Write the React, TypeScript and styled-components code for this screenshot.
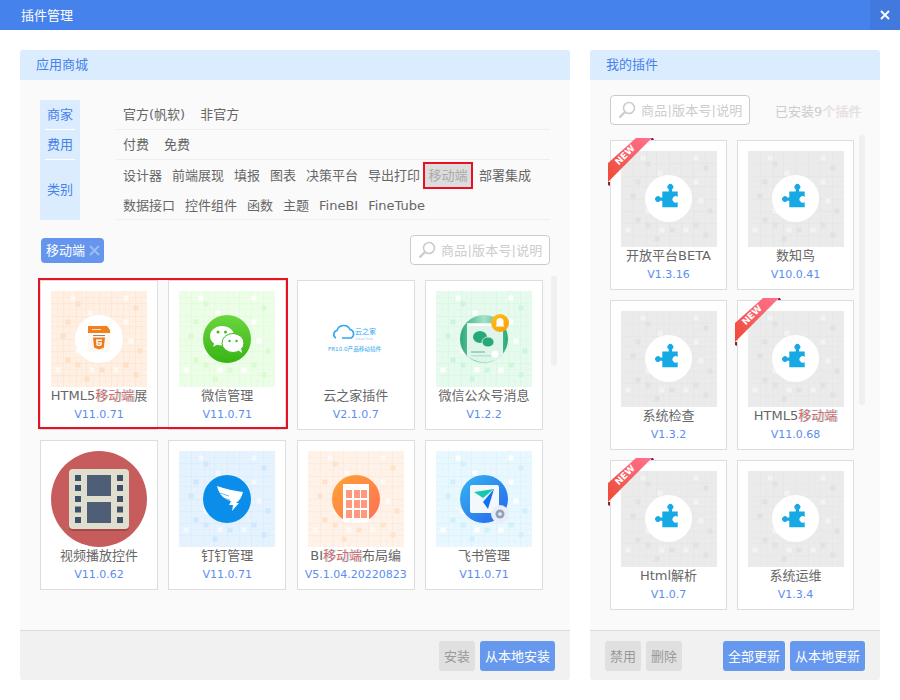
import React from 'react'
import styled, { createGlobalStyle } from 'styled-components'

const FONT = `"DejaVu Sans", "Noto Sans CJK SC", sans-serif`

const GlobalStyle = createGlobalStyle`
  html, body {
    margin: 0;
    padding: 0;
    background: #fff;
    font-family: ${FONT};
    font-size: 13px;
    color: #666;
  }
  * { box-sizing: border-box; }
`

const Mark = styled.span`
  color: #dc6468;
  text-shadow: 1px 0 rgba(60, 220, 220, 0.55);
`

type Tone = 'orange' | 'green' | 'mint' | 'blue' | 'sky' | 'grey' | 'salmon'

const tones: Record<Tone, { bg: string; line: string; dark: string; light: string }> = {
  orange: { bg: '#fff0e3', line: '#fbe7d5', dark: '#fde0c8', light: '#fff9f4' },
  salmon: { bg: '#fff3e9', line: '#fdeadb', dark: '#fee3cc', light: '#fffaf6' },
  green: { bg: '#edfee8', line: '#e3fbdc', dark: '#d9fbcf', light: '#ffffff' },
  mint: { bg: '#e6fbee', line: '#d9f8e5', dark: '#cdf5db', light: '#ffffff' },
  blue: { bg: '#e6f3fe', line: '#d9edfd', dark: '#cfe8fd', light: '#f3f9ff' },
  sky: { bg: '#e9f8fe', line: '#ddf3fd', dark: '#d2effc', light: '#ffffff' },
  grey: { bg: '#ebebeb', line: '#e7e7e7', dark: '#e1e1e1', light: '#f3f3f3' },
}

const gridLines = [12, 25, 35, 48, 60, 72, 84]
const fineLines = [6, 18, 30, 42, 54, 66, 78, 90]
const darkCells = [
  [27, 13], [85, 17], [17, 31], [12, 45], [89, 60], [17, 69], [27, 74], [75, 74], [51, 79], [85, 84], [36, 88],
]
const lightCells = [
  [22, 7], [75, 7], [39, 22], [75, 31], [80, 50], [7, 79], [41, 79], [65, 79], [27, 60],
]

function Tile({ tone, children }: { tone: Tone; children?: React.ReactNode }) {
  const t = tones[tone]
  return (
    <TileSvg viewBox="0 0 96 96">
      <rect width="96" height="96" fill={t.bg} />
      {fineLines.map((p) => (
        <g key={p} fill={t.line} opacity="0.35">
          <rect x={p} y="0" width="1" height="96" />
          <rect x="0" y={p} width="96" height="1" />
        </g>
      ))}
      {gridLines.map((p) => (
        <g key={p} fill={t.line} opacity="0.8">
          <rect x={p} y="0" width="1" height="96" />
          <rect x="0" y={p} width="96" height="1" />
        </g>
      ))}
      {darkCells.map(([x, y]) => (
        <rect key={`d${x}-${y}`} x={x - 2.5} y={y - 2.5} width="5" height="5" fill={t.dark} />
      ))}
      {lightCells.map(([x, y]) => (
        <rect key={`l${x}-${y}`} x={x - 2.5} y={y - 2.5} width="5" height="5" fill={t.light} />
      ))}
      {children}
    </TileSvg>
  )
}

function PuzzleArt() {
  return (
    <Tile tone="grey">
      <circle cx="47.5" cy="47.5" r="23.5" fill="#fff" />
      <path
        d="M41.3 40.5h6.4v-2.2a2.9 2.9 0 1 1 3.4 0v2.2h5.6v5.4a3.2 3.2 0 1 0 0 5v5.4H41.3v-6.6h-2.1a2.8 2.8 0 1 1 0-3.3h2.1z"
        fill="#16a9e3"
      />
    </Tile>
  )
}

function Html5Art() {
  return (
    <Tile tone="orange">
      <circle cx="48" cy="48" r="24" fill="#fff" />
      <rect x="37" y="35" width="22" height="26" fill="#fff8f2" />
      <path d="M37 35h19l3 4v3H37z" fill="#f2811d" />
      <rect x="41" y="38" width="9" height="1" fill="#fde0c0" />
      <rect x="42" y="44" width="12" height="1" fill="#8a8a8a" />
      <path d="M42 46.500h12l-1.100 10-4.900 1.900-4.900-1.900z" fill="#ef7a1a" />
      <path d="M45 48.500h6v1.500h-4.300v1.300h4.300l-.4 3-2.600.9-2.600-.9-.2-1.500h1.500l.1.600 1.200.4 1.200-.4.2-1h-4.100z" fill="#fff" />
    </Tile>
  )
}

function WechatArt() {
  return (
    <Tile tone="green">
      <defs>
        <linearGradient id="wxg" x1="0" y1="0" x2="0" y2="1">
          <stop offset="0" stopColor="#6ad63e" />
          <stop offset="1" stopColor="#37b416" />
        </linearGradient>
      </defs>
      <circle cx="48" cy="48" r="24" fill="url(#wxg)" />
      <path d="M43 35c-6.500 0-12 4.500-12 10 0 3 1.600 5.600 4.100 7.400l-1 3.400 4-2.100c1.500.4 3.200.7 4.900.7 6.600 0 12-4.500 12-10s-5.400-9.400-12-9.400z" fill="#fff" />
      <ellipse cx="54" cy="52" rx="11" ry="9.500" fill="#fff" stroke="#43bb20" strokeWidth="1" />
      <path d="M59.500 59.500l3.500 2.500-.8-4z" fill="#fff" />
      <circle cx="39" cy="41" r="1.500" fill="#43bb20" />
      <circle cx="46.500" cy="41" r="1.500" fill="#43bb20" />
      <circle cx="50.500" cy="50" r="1.200" fill="#43bb20" />
      <circle cx="57.500" cy="50" r="1.200" fill="#43bb20" />
    </Tile>
  )
}

function CloudArt() {
  return (
    <TileSvg viewBox="0 0 96 96">
      <path d="M28 47a4 4 0 0 1 1-7.500 7 7 0 0 1 13-1 4.500 4.500 0 0 1 1 8.500H34" fill="none" stroke="#2ea7f2" strokeWidth="1.600" />
      <CloudText x="47" y="43" fontSize="7" fill="#2ea7f2">云之家</CloudText>
      <CloudText x="47" y="48.500" fontSize="3.400" fill="#8ccbf5">Cloud Hub</CloudText>
      <CloudText x="20" y="60" fontSize="5.600" fill="#35aaf3">FR10.0产品移动插件</CloudText>
    </TileSvg>
  )
}

function OfficialAccountArt() {
  return (
    <Tile tone="mint">
      <defs>
        <linearGradient id="oag" x1="0" y1="0" x2="1" y2="0">
          <stop offset="0" stopColor="#2aa878" />
          <stop offset=".5" stopColor="#a5e2c8" />
          <stop offset="1" stopColor="#2aa878" />
        </linearGradient>
        <linearGradient id="bell" x1="0" y1="0" x2="1" y2="1">
          <stop offset="0" stopColor="#ffc21a" />
          <stop offset="1" stopColor="#fb9b06" />
        </linearGradient>
      </defs>
      <circle cx="48" cy="48" r="24" fill="url(#oag)" />
      <path d="M31 32h36v33c-5 4-12 6-18 6s-13-2-18-6z" fill="#dff5ec" />
      <rect x="33" y="33" width="32" height="2" fill="#fff" />
      <ellipse cx="44" cy="46" rx="7" ry="6" fill="#27a877" />
      <ellipse cx="52" cy="51" rx="6" ry="5" fill="#27a877" stroke="#dff5ec" strokeWidth=".8" />
      <rect x="35" y="60" width="14" height="2" fill="#9ad8bd" />
      <rect x="35" y="64" width="20" height="1.500" fill="#b9e4d0" />
      <circle cx="59" cy="63" r="3.500" fill="#fff" />
      <circle cx="64" cy="32" r="9" fill="url(#bell)" />
      <path d="M64 27a3.500 3.500 0 0 0-3.500 3.500V34l-1 1.500h9L67.500 34v-3.500A3.500 3.500 0 0 0 64 27z" fill="#fff" />
    </Tile>
  )
}

const filmHoles = [24, 34, 45, 55.5, 66]

function FilmArt() {
  return (
    <TileSvg viewBox="0 0 96 96">
      <circle cx="48" cy="48" r="48" fill="#c65c5c" />
      <rect x="18" y="20" width="60" height="60" rx="4" fill="#a34a4a" />
      <rect x="18" y="18" width="60" height="60" rx="4" fill="#e0dfcf" />
      <rect x="36" y="24" width="24" height="21" fill="#4d5e76" />
      <rect x="36" y="51" width="24" height="21" fill="#4d5e76" />
      {filmHoles.map((y) => (
        <g key={y} fill="#3f5069">
          <rect x="24" y={y} width="6" height="6" />
          <rect x="66" y={y} width="6" height="6" />
        </g>
      ))}
    </TileSvg>
  )
}

function DingtalkArt() {
  return (
    <Tile tone="blue">
      <circle cx="48" cy="48" r="24" fill="#0a8ee9" />
      <path d="M38 35c8 3 18 5 26 6-1 5-4 9-7 11h3l-7 8 1-6h-4l2-4c-6-1-12-6-14-15z" fill="#fff" />
      <path d="M41 42l9 3M44 47l7 2" stroke="#0a8ee9" strokeWidth=".6" />
    </Tile>
  )
}

function LayoutArt() {
  return (
    <Tile tone="salmon">
      <defs>
        <linearGradient id="big" x1="0" y1="0" x2="1" y2="1">
          <stop offset="0" stopColor="#ffa432" />
          <stop offset="1" stopColor="#ff6d5a" />
        </linearGradient>
      </defs>
      <circle cx="48" cy="48" r="24" fill="url(#big)" />
      <path d="M35 33h26v37c-4 1.700-8 2-13 2s-9-.5-13-2z" fill="#fff" />
      {[38, 46, 53].map((x) =>
        [39, 49, 59].map((y) => <rect key={`${x}-${y}`} x={x} y={y} width="6" height="8" fill="#ff9a80" />),
      )}
    </Tile>
  )
}

function FeishuArt() {
  return (
    <Tile tone="sky">
      <defs>
        <linearGradient id="fsg" x1="0" y1="0" x2="1" y2="1">
          <stop offset="0" stopColor="#35b6f0" />
          <stop offset="1" stopColor="#2763ee" />
        </linearGradient>
      </defs>
      <circle cx="48" cy="48" r="24" fill="url(#fsg)" />
      <rect x="34" y="34" width="29" height="28" rx="2" fill="#f4f8fd" />
      <path d="M38 41l20-3-11 9z" fill="#14c9ad" />
      <path d="M58 38l-11 13 5 7z" fill="#0f72f0" />
      <circle cx="64" cy="63" r="9" fill="#e8eef7" />
      <circle cx="64" cy="63" r="4.500" fill="#8fa3bf" />
      <circle cx="64" cy="63" r="1.800" fill="#e8eef7" />
    </Tile>
  )
}

function Ribbon() {
  return (
    <RibbonSvg viewBox="0 0 46 48">
      <defs>
        <linearGradient id="rb" x1="1" y1="0" x2="0" y2="1">
          <stop offset="0" stopColor="#ff7392" />
          <stop offset="1" stopColor="#ee4a33" />
        </linearGradient>
      </defs>
      <path d="M43 0h2l1 2h-3zM0 44v3l2 1v-4z" fill="#8c1f35" />
      <path d="M28 0h16L0 44V25z" fill="url(#rb)" />
      <RibbonText x="17" y="20" transform="rotate(-45 17 17)">NEW</RibbonText>
    </RibbonSvg>
  )
}

function SearchBox() {
  return (
    <SearchField>
      <svg width="20" height="20" viewBox="0 0 20 20" fill="none" stroke="#ccc">
        <circle cx="12" cy="8" r="5.500" strokeWidth="1.600" />
        <path d="M8 12l-5.500 5.500" strokeWidth="2.400" />
      </svg>
      <SearchHint>商品|版本号|说明</SearchHint>
    </SearchField>
  )
}

const storeCards: { name: React.ReactNode; version: string; art: React.ReactNode }[] = [
  { name: <>HTML5<Mark>移动端</Mark>展</>, version: 'V11.0.71', art: <Html5Art /> },
  { name: '微信管理', version: 'V11.0.71', art: <WechatArt /> },
  { name: '云之家插件', version: 'V2.1.0.7', art: <CloudArt /> },
  { name: '微信公众号消息', version: 'V1.2.2', art: <OfficialAccountArt /> },
  { name: '视频播放控件', version: 'V11.0.62', art: <FilmArt /> },
  { name: '钉钉管理', version: 'V11.0.71', art: <DingtalkArt /> },
  { name: <>BI<Mark>移动端</Mark>布局编</>, version: 'V5.1.04.20220823', art: <LayoutArt /> },
  { name: '飞书管理', version: 'V11.0.71', art: <FeishuArt /> },
]

const myCards: { name: React.ReactNode; version: string; isNew?: boolean }[] = [
  { name: '开放平台BETA', version: 'V1.3.16', isNew: true },
  { name: '数知鸟', version: 'V10.0.41' },
  { name: '系统检查', version: 'V1.3.2' },
  { name: <>HTML5<Mark>移动端</Mark></>, version: 'V11.0.68', isNew: true },
  { name: 'Html解析', version: 'V1.0.7', isNew: true },
  { name: '系统运维', version: 'V1.3.4' },
]

export default function App() {
  return (
    <>
      <GlobalStyle />
      <TitleBar>
        <TitleText>插件管理</TitleText>
        <CloseButton>
          <svg width="10" height="10" viewBox="0 0 10 10" stroke="#fff" strokeWidth="1.800">
            <path d="M1 1l8 8M9 1l-8 8" />
          </svg>
        </CloseButton>
      </TitleBar>
      <Content>
        <Panel $width={550}>
          <PanelHeader>应用商城</PanelHeader>
          <StoreBody>
            <Filters>
              <FilterLabels>
                <FilterLabel $height={30}>商家</FilterLabel>
                <FilterLabel $height={30}>费用</FilterLabel>
                <FilterLabel $height={60} $last>类别</FilterLabel>
              </FilterLabels>
              <FilterRows>
                <FilterGroup>
                  <FilterLine $gap={5}>
                    <FilterItem>官方(帆软)</FilterItem>
                    <FilterItem>非官方</FilterItem>
                  </FilterLine>
                </FilterGroup>
                <FilterGroup>
                  <FilterLine $gap={5}>
                    <FilterItem>付费</FilterItem>
                    <FilterItem>免费</FilterItem>
                  </FilterLine>
                </FilterGroup>
                <FilterGroup>
                  <FilterLine $gap={0}>
                    <FilterItem>设计器</FilterItem>
                    <FilterItem>前端展现</FilterItem>
                    <FilterItem>填报</FilterItem>
                    <FilterItem>图表</FilterItem>
                    <FilterItem>决策平台</FilterItem>
                    <FilterItem>导出打印</FilterItem>
                    <FilterItem $active>移动端</FilterItem>
                    <FilterItem>部署集成</FilterItem>
                  </FilterLine>
                  <FilterLine $gap={0}>
                    <FilterItem>数据接口</FilterItem>
                    <FilterItem>控件组件</FilterItem>
                    <FilterItem>函数</FilterItem>
                    <FilterItem>主题</FilterItem>
                    <FilterItem>FineBI</FilterItem>
                    <FilterItem>FineTube</FilterItem>
                  </FilterLine>
                </FilterGroup>
              </FilterRows>
            </Filters>
            <StoreTools>
              <SelectedTag>
                <TagText>移动端</TagText>
                <svg width="11" height="11" viewBox="0 0 11 11" stroke="#9dbcf5" strokeWidth="2">
                  <path d="M1 1l9 9M10 1l-9 9" />
                </svg>
              </SelectedTag>
              <SearchBox />
            </StoreTools>
            <StoreGridArea>
              <StoreGrid>
                {storeCards.map((card, i) => (
                  <PluginCard key={i}>
                    {card.art}
                    <CardName>{card.name}</CardName>
                    <CardVersion>{card.version}</CardVersion>
                  </PluginCard>
                ))}
              </StoreGrid>
              <Highlight />
              <ScrollThumb $top={-4} $height={90} $right={-7} />
            </StoreGridArea>
          </StoreBody>
          <PanelFooter>
            <span />
            <ButtonGroup>
              <ActionButton disabled>安装</ActionButton>
              <ActionButton>从本地安装</ActionButton>
            </ButtonGroup>
          </PanelFooter>
        </Panel>
        <Panel $width={290}>
          <PanelHeader>我的插件</PanelHeader>
          <MineBody>
            <MineTools>
              <SearchBox />
              <InstalledCount>已安装9<Pale>个插件</Pale></InstalledCount>
            </MineTools>
            <MineGridArea>
              <MineGrid>
                {myCards.map((card) => (
                  <PluginCard key={card.version}>
                    {card.isNew && <Ribbon />}
                    <PuzzleArt />
                    <CardName>{card.name}</CardName>
                    <CardVersion>{card.version}</CardVersion>
                  </PluginCard>
                ))}
              </MineGrid>
              <ScrollThumb $top={-5} $height={270} $right={15} />
            </MineGridArea>
          </MineBody>
          <PanelFooter>
            <ButtonGroup>
              <ActionButton disabled>禁用</ActionButton>
              <ActionButton disabled>删除</ActionButton>
            </ButtonGroup>
            <ButtonGroup>
              <ActionButton>全部更新</ActionButton>
              <ActionButton>从本地更新</ActionButton>
            </ButtonGroup>
          </PanelFooter>
        </Panel>
      </Content>
    </>
  )
}

const TitleBar = styled.header`
  height: 30px;
  display: flex;
  align-items: center;
  justify-content: space-between;
  padding-left: 21px;
  background: #4682ec;
  color: #fff;
`

const TitleText = styled.span`
  padding-bottom: 2px;
`

const CloseButton = styled.div`
  width: 30px;
  height: 30px;
  display: flex;
  align-items: center;
  justify-content: center;
  background: #4279de;
`

const Content = styled.main`
  display: flex;
  gap: 20px;
  padding: 20px;
`

const Panel = styled.section<{ $width: number }>`
  width: ${(p) => p.$width}px;
  height: 630px;
  display: flex;
  flex-direction: column;
  background: #fafafa;
  border-radius: 3px;
  overflow: hidden;
`

const PanelHeader = styled.h2`
  height: 30px;
  margin: 0;
  padding-left: 16px;
  background: #dbecfe;
  color: #4682ec;
  font-size: 13px;
  font-weight: normal;
  line-height: 30px;
`

const StoreBody = styled.div`
  flex: 1;
  padding: 20px 20px 0;
  min-height: 0;
`

const MineBody = styled.div`
  flex: 1;
  padding: 15px 0 0 20px;
  min-height: 0;
`

const Filters = styled.div`
  display: flex;
  gap: 37px;
`

const FilterLabels = styled.div`
  width: 40px;
  padding: 0 5px;
  background: #dbecfe;
`

const FilterLabel = styled.div<{ $height: number; $last?: boolean }>`
  height: ${(p) => p.$height}px;
  line-height: ${(p) => p.$height - 1}px;
  text-align: center;
  color: #4682ec;
  white-space: nowrap;
  border-bottom: 1px solid ${(p) => (p.$last ? 'transparent' : '#fff')};
`

const FilterRows = styled.div`
  flex: 1;
`

const FilterGroup = styled.div`
  border-bottom: 1px solid #eee;
`

const FilterLine = styled.div<{ $gap: number }>`
  height: 30px;
  display: flex;
  align-items: center;
  gap: ${(p) => p.$gap}px;
  padding-left: 1px;
  &:last-child { height: 29px; }
  & + & { padding-top: 2px; }
`

const FilterItem = styled.span<{ $active?: boolean }>`
  height: 23px;
  line-height: 23px;
  padding: 0 5px;
  white-space: nowrap;
  ${(p) => p.$active && `
    background: #ddd;
    color: #aaa;
    padding: 0 3.5px;
    margin: 0 3px 0 0;
    outline: 2px solid #e81123;
  `}
`

const StoreTools = styled.div`
  height: 30px;
  margin-top: 15px;
  display: flex;
  align-items: center;
  justify-content: space-between;
`

const SelectedTag = styled.div`
  width: 63px;
  height: 25px;
  margin-left: 1px;
  padding-left: 5px;
  display: flex;
  align-items: center;
  gap: 4px;
  background: #6595ec;
  border-radius: 4px;
  color: #fff;
`

const TagText = styled.span`
  padding-bottom: 2px;
`

const SearchField = styled.div`
  width: 140px;
  height: 30px;
  flex: none;
  display: flex;
  align-items: center;
  gap: 4px;
  padding-left: 6px;
  border: 1px solid #ccc;
  border-radius: 4px;
  background: #fff;
`

const SearchHint = styled.span`
  padding-bottom: 2px;
  color: #ccc;
  letter-spacing: 0.2px;
  white-space: nowrap;
`

const StoreGridArea = styled.div`
  position: relative;
  margin-top: 15px;
`

const StoreGrid = styled.div`
  display: grid;
  grid-template-columns: repeat(4, 118px);
  column-gap: 10.33px;
  row-gap: 10px;
`

const MineTools = styled.div`
  height: 30px;
  display: flex;
  align-items: center;
  gap: 25px;
`

const InstalledCount = styled.span`
  color: #ccc;
  white-space: nowrap;
`

const Pale = styled.span`
  color: #f0d8d8;
  text-shadow: 1px 0 rgba(190, 240, 240, 0.6);
`

const MineGridArea = styled.div`
  position: relative;
  margin-top: 15px;
`

const MineGrid = styled.div`
  display: grid;
  grid-template-columns: repeat(2, 117px);
  column-gap: 10px;
  row-gap: 10px;
`

const PluginCard = styled.article`
  position: relative;
  height: 150px;
  display: flex;
  flex-direction: column;
  align-items: center;
  padding: 10px 10px 0;
  background: #fff;
  border: 1px solid #ddd;
`

const TileSvg = styled.svg`
  flex: none;
  width: 96px;
  height: 96px;
  display: block;
`

const CloudText = styled.text`
  font-family: ${FONT};
`

const CardName = styled.div`
  height: 18px;
  line-height: 18px;
  text-align: center;
  white-space: nowrap;
`

const CardVersion = styled.div`
  margin-top: 2px;
  font-size: 11px;
  line-height: 16px;
  color: #5b8def;
  white-space: nowrap;
`

const RibbonSvg = styled.svg`
  position: absolute;
  left: -3px;
  top: -3px;
  width: 46px;
  height: 48px;
`

const RibbonText = styled.text`
  font-family: "DejaVu Sans", sans-serif;
  font-size: 9px;
  font-weight: bold;
  fill: #fff;
  text-anchor: middle;
`

const Highlight = styled.div`
  position: absolute;
  left: -2px;
  top: -2px;
  width: 250px;
  height: 151px;
  border: 2px solid #e81123;
  pointer-events: none;
`

const ScrollThumb = styled.div<{ $top: number; $height: number; $right: number }>`
  position: absolute;
  right: ${(p) => p.$right}px;
  top: ${(p) => p.$top}px;
  width: 6px;
  height: ${(p) => p.$height}px;
  background: #f0f0f0;
  border-radius: 3px;
`

const PanelFooter = styled.footer`
  height: 50px;
  flex: none;
  display: flex;
  align-items: center;
  justify-content: space-between;
  padding: 0 15px;
  background: #f1f1f1;
  border-top: 1px solid #ddd;
`

const ButtonGroup = styled.div`
  display: flex;
  gap: 5px;
`

const ActionButton = styled.button`
  height: 30px;
  padding: 0 5px;
  border: none;
  border-radius: 3px;
  background: #6699ee;
  color: #fff;
  font-family: ${FONT};
  font-size: 13px;
  white-space: nowrap;
  &:disabled {
    background: #e0e0e0;
    color: #999;
  }
`
